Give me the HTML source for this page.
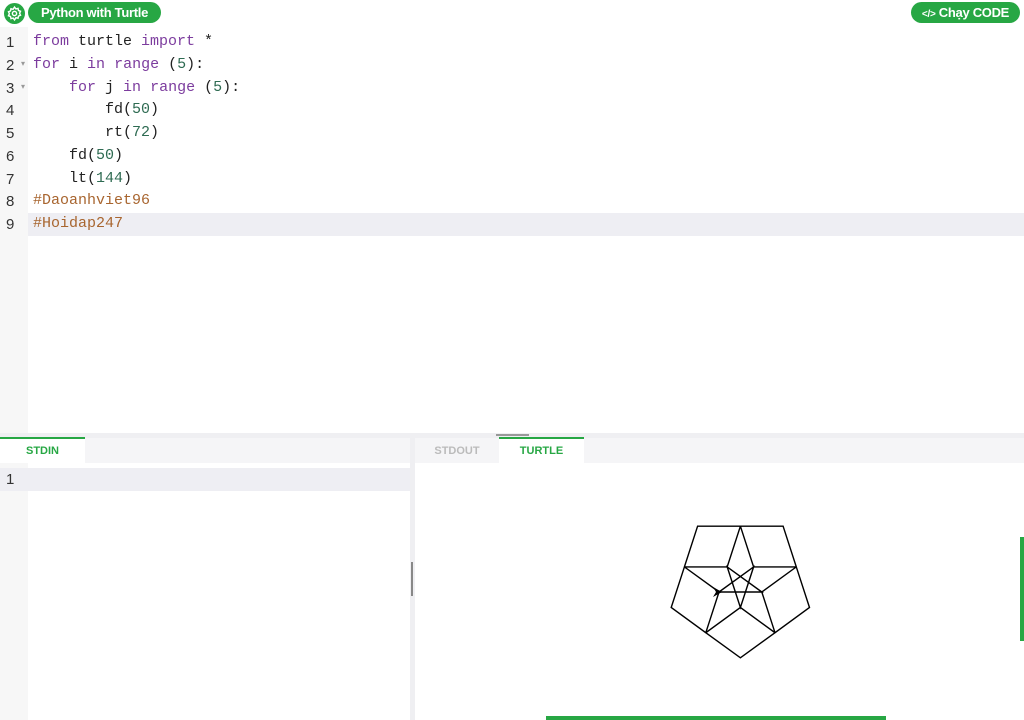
<!DOCTYPE html>
<html><head><meta charset="utf-8"><style>
*{margin:0;padding:0;box-sizing:border-box}
body{width:1024px;height:720px;overflow:hidden;background:#fff;font-family:"Liberation Sans",sans-serif;position:relative}
.abs{position:absolute}
.pill{background:#27a744;color:#fff;font-weight:bold;font-size:13px;border-radius:11px;height:21px;line-height:21px;letter-spacing:-0.3px}
.ln{position:absolute;left:6px;font-family:"Liberation Sans",sans-serif;font-size:15px;color:#333}
.line{position:absolute;left:33px;white-space:pre;font-family:"Liberation Mono",monospace;font-size:15px;color:#222}
.k{color:#7c3c9e}.n{color:#2e6b52}.c{color:#a8652f}
</style></head><body>
<div class="abs" style="left:4px;top:3px;width:21px;height:21px;border-radius:50%;background:#27a744"></div>
<svg class="abs" style="left:6px;top:5px" width="17" height="17" viewBox="0 0 24 24" fill="none" stroke="#fff" stroke-width="2"><circle cx="12" cy="12" r="3"/><path d="M12 3l2 2.5 3-.8.6 3 2.9 1.2-1.3 2.8 1.3 2.8-2.9 1.2-.6 3-3-.8L12 21l-2-2.5-3 .8-.6-3-2.9-1.2 1.3-2.8-1.3-2.8 2.9-1.2.6-3 3 .8z"/></svg>
<div class="abs pill" style="left:28px;top:2px;width:133px;text-align:center">Python with Turtle</div>
<div class="abs pill" style="left:911px;top:2px;width:109px;text-align:center;font-size:13px"><span style="font-size:10px">&lt;/&gt;</span> Chạy CODE</div>
<div class="abs" style="left:0;top:27px;width:28px;height:406px;background:#f7f7f7"></div>
<div class="abs" style="left:28px;top:213px;width:996px;height:23px;background:#eeeef3"></div>
<div class="ln" style="top:34px">1</div><div class="line" style="top:33px"><span class="k">from</span> turtle <span class="k">import</span> *</div>
<div class="ln" style="top:57px">2</div><div class="abs" style="left:21px;top:59px;font-size:8px;color:#999">▾</div><div class="line" style="top:56px"><span class="k">for</span> i <span class="k">in</span> <span class="k">range</span> (<span class="n">5</span>):</div>
<div class="ln" style="top:80px">3</div><div class="abs" style="left:21px;top:82px;font-size:8px;color:#999">▾</div><div class="line" style="top:79px">    <span class="k">for</span> j <span class="k">in</span> <span class="k">range</span> (<span class="n">5</span>):</div>
<div class="ln" style="top:102px">4</div><div class="line" style="top:101px">        fd(<span class="n">50</span>)</div>
<div class="ln" style="top:125px">5</div><div class="line" style="top:124px">        rt(<span class="n">72</span>)</div>
<div class="ln" style="top:148px">6</div><div class="line" style="top:147px">    fd(<span class="n">50</span>)</div>
<div class="ln" style="top:171px">7</div><div class="line" style="top:170px">    lt(<span class="n">144</span>)</div>
<div class="ln" style="top:193px">8</div><div class="line c" style="top:192px">#Daoanhviet96</div>
<div class="ln" style="top:216px">9</div><div class="line c" style="top:215px">#Hoidap247</div>
<div class="abs" style="left:0;top:433px;width:1024px;height:5px;background:#efeff2"></div>
<div class="abs" style="left:496px;top:434px;width:33px;height:2px;background:#999"></div>
<div class="abs" style="left:0;top:438px;width:410px;height:25px;background:#f5f5f7"></div>
<div class="abs" style="left:0;top:437px;width:85px;height:26px;background:#fff;border-top:2px solid #27a744;color:#27a744;font-weight:bold;font-size:11px;text-align:center;line-height:24px">STDIN</div>
<div class="abs" style="left:0;top:463px;width:28px;height:257px;background:#f7f7f7"></div>
<div class="abs" style="left:0;top:468px;width:410px;height:23px;background:#eeeef3"></div>
<div class="ln" style="top:471px;left:6px">1</div>
<div class="abs" style="left:410px;top:438px;width:5px;height:282px;background:#efeff2"></div>
<div class="abs" style="left:411px;top:562px;width:2px;height:34px;background:#888"></div>
<div class="abs" style="left:415px;top:438px;width:609px;height:25px;background:#f5f5f7"></div>
<div class="abs" style="left:415px;top:437px;width:84px;height:26px;color:#bbb;font-weight:bold;font-size:11px;text-align:center;line-height:28px">STDOUT</div>
<div class="abs" style="left:499px;top:437px;width:85px;height:26px;background:#fff;border-top:2px solid #27a744;color:#27a744;font-weight:bold;font-size:11px;text-align:center;line-height:24px">TURTLE</div>
<div class="abs" style="left:1020px;top:537px;width:4px;height:104px;background:#27a744"></div>
<div class="abs" style="left:546px;top:716px;width:340px;height:4px;background:#27a744"></div>
<svg class="abs" style="left:0;top:0" width="1024" height="720"><path id="t" fill="none" stroke="#000" stroke-width="1.4"/><polygon id="a" fill="#000"/></svg>
<script>
var x=719,y=592,h=0,s=0.855,d="M"+x+" "+y;
function fd(n){x+=Math.cos(h*Math.PI/180)*n*s;y+=Math.sin(h*Math.PI/180)*n*s;d+=" L"+x.toFixed(1)+" "+y.toFixed(1);}
for(var i=0;i<5;i++){for(var j=0;j<5;j++){fd(50);h+=72;}fd(50);h-=144;}
document.getElementById("t").setAttribute("d",d);
document.getElementById("a").setAttribute("points",(x+3)+","+y+" "+(x-6)+","+(y-5)+" "+(x-3)+","+y+" "+(x-6)+","+(y+5));
</script>
</body></html>
